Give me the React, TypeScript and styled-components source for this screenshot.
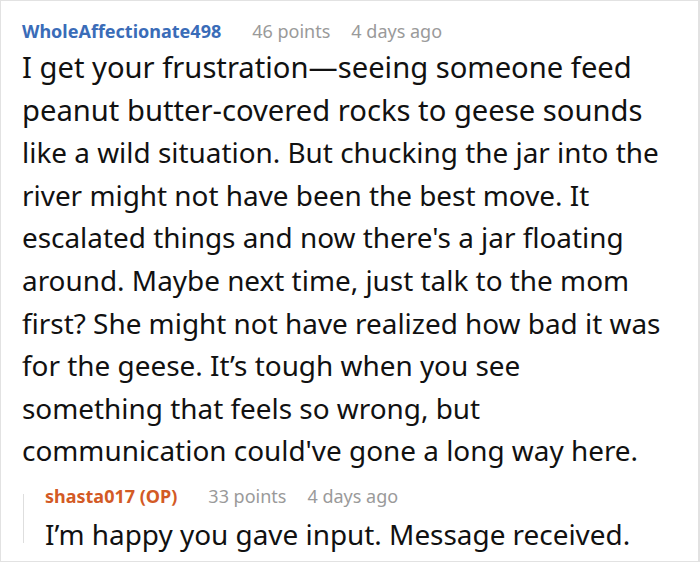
import React from "react";
import styled, { createGlobalStyle } from "styled-components";

const Global = createGlobalStyle`
  html, body { margin: 0; padding: 0; background: #fff; }
  body { font-family: "Noto Sans", "Open Sans", sans-serif; }
`;

const Frame = styled.div`
  width: 700px;
  height: 562px;
  box-sizing: border-box;
  border: 1px solid #e2e2e2;
  border-right-width: 2px;
  padding: 15px 10px 0 21px;
  overflow: hidden;
  color: #111;
`;

const Meta = styled.div<{ $h: number }>`
  display: flex;
  align-items: baseline;
  font-size: 18px;
  line-height: ${(p) => p.$h}px;
`;

const Author = styled.span<{ $op?: boolean }>`
  font-weight: 700;
  color: ${(p) => (p.$op ? "#d35a25" : "#3a6cb8")};
  margin-right: 31px;
`;

const Info = styled.span`
  color: #9a9a9a;
  margin-right: 21px;
`;

const Body = styled.div<{ $reply?: boolean }>`
  margin-top: ${(p) => (p.$reply ? "1px" : "0")};
`;

const Line = styled.div<{ $narrow?: boolean }>`
  white-space: nowrap;
  font-size: ${(p) => (p.$narrow ? "27.9px" : "29.2px")};
  line-height: 42.6px;
`;

const Reply = styled.div`
  display: flex;
  margin-top: 8px;
  margin-left: 1px;
`;

const Rail = styled.div`
  flex: none;
  width: 1px;
  height: 49px;
  margin-top: 14px;
  background: #dedede;
`;

const ReplyContent = styled.div`
  padding-left: 21px;
`;

const mainLines: [string, boolean][] = [
  ["I get your frustration—seeing someone feed", false],
  ["peanut butter-covered rocks to geese sounds", false],
  ["like a wild situation. But chucking the jar into the", true],
  ["river might not have been the best move. It", true],
  ["escalated things and now there's a jar floating", true],
  ["around. Maybe next time, just talk to the mom", true],
  ["first? She might not have realized how bad it was", true],
  ["for the geese. It’s tough when you see", true],
  ["something that feels so wrong, but", true],
  ["communication could've gone a long way here.", true],
];

export default function App() {
  return (
    <>
      <Global />
      <Frame>
        <Meta $h={30}>
          <Author>WholeAffectionate498</Author>
          <Info>46 points</Info>
          <Info>4 days ago</Info>
        </Meta>
        <Body>
          {mainLines.map(([text, narrow], i) => (
            <Line key={i} $narrow={narrow}>
              {text}
            </Line>
          ))}
        </Body>
        <Reply>
          <Rail />
          <ReplyContent>
            <Meta $h={32}>
              <Author $op>shasta017 (OP)</Author>
              <Info>33 points</Info>
              <Info>4 days ago</Info>
            </Meta>
            <Body $reply>
              <Line $narrow>I’m happy you gave input. Message received.</Line>
            </Body>
          </ReplyContent>
        </Reply>
      </Frame>
    </>
  );
}
